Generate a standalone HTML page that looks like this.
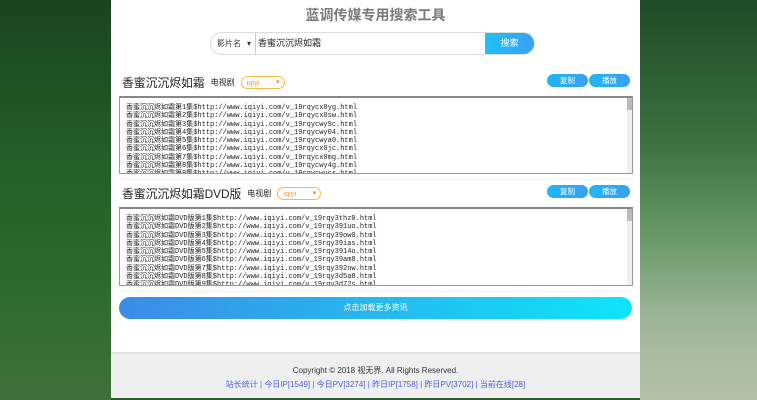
<!DOCTYPE html>
<html><head><meta charset="utf-8"><style>
*{box-sizing:border-box;margin:0;padding:0}
body{width:757px;height:400px;overflow:hidden;position:relative;font-family:"Liberation Sans","Noto Sans CJK SC",sans-serif;
background:#2a6030;}
.bgr{position:absolute;left:640px;top:0;width:117px;height:400px;background:linear-gradient(180deg,#1f4a26 0%,#3c7040 35%,#6a9a6a 60%,#9fb59a 80%,#b5c2aa 100%)}
.bgl{position:absolute;left:0;top:0;width:111px;height:400px;background:linear-gradient(180deg,#1b4420 0%,#245e28 40%,#2c6a2c 70%,#406f3a 100%)}
.panel{position:absolute;left:111px;top:0;width:529px;height:352px;background:#fff}
.foot{position:absolute;left:111px;top:352px;width:529px;height:46px;background:#efefef;border-top:2px solid #e4e4e4;text-align:center}
.title{position:absolute;top:5px;width:100%;text-align:center;font-size:14px;font-weight:bold;color:#7a7a7a}
.search{position:absolute;left:99px;top:32px;width:325px;height:23px;border:1px solid #ddd;border-radius:12px;overflow:hidden;background:#fff}
.sel{position:absolute;left:0;top:0;width:45px;height:21px;font-size:8px;line-height:21px;padding-left:6px;color:#333;border-right:1px solid #ccc}
.sel::after{content:"▾";position:absolute;right:4px;font-size:8px}
.inp{position:absolute;left:47px;top:0;font-size:9px;line-height:21px;color:#222}
.btn{position:absolute;right:0;top:0;width:49px;height:21px;background:linear-gradient(90deg,#1fc0f7,#3aa0f2);color:#fff;font-size:9px;line-height:21px;text-align:center}
.h{position:absolute;left:11px;display:flex;align-items:center;height:16px;font-size:11.8px;color:#222}
.h small{font-size:8px;margin-left:6px}
.dd{position:relative;margin-left:6px;width:44px;height:13px;border:1px solid #f7b84a;border-radius:7px;font-size:7.5px;color:#f49b2c;line-height:11px;padding-left:5px}
.dd::after{content:"▾";position:absolute;right:4px;top:0;font-size:7px;color:#e79020}
.b2{position:absolute;width:41px;height:13px;border-radius:7px;background:linear-gradient(90deg,#1fb6f6,#3aa0f2);color:#fff;font-size:7.5px;line-height:13px;text-align:center}
.ta{position:absolute;left:8px;width:514px;border:1px solid #999;border-top:2px solid #888;overflow:hidden;padding:6px 0 0 6px;font-family:"Liberation Mono","Noto Sans CJK SC",monospace;font-size:7px;line-height:8.3px;color:#222;white-space:pre}
.sb{position:absolute;right:0;top:0;width:5px;height:100%;background:#f0f0f0}
.sb::before{content:"";position:absolute;left:0;top:0;width:5px;height:12px;background:#bbb}
.more{position:absolute;left:8px;top:297px;width:513px;height:22px;border-radius:11px;background:linear-gradient(90deg,#3c8ce6,#0ee5f8);color:#fff;font-size:8px;line-height:22px;text-align:center}
.sep{position:absolute;left:8px;width:513px;height:1px;background:#eee}
</style></head><body>
<div class="bgl"></div><div class="bgr"></div>
<div class="panel">
<div class="title">蓝调传媒专用搜索工具</div>
<div class="search"><div class="sel">影片名</div><div class="inp">香蜜沉沉烬如霜</div><div class="btn">搜索</div></div>
<div class="h" style="top:74px">香蜜沉沉烬如霜<small>电视剧</small><div class="dd">iqiyi</div></div>
<div class="b2" style="left:436px;top:74px">复制</div><div class="b2" style="left:478px;top:74px">播放</div>
<div class="ta" style="top:96px;height:78px"><div class="sb"></div>香蜜沉沉烬如霜第1集$http://www.iqiyi.com/v_19rqycx0yg.html
香蜜沉沉烬如霜第2集$http://www.iqiyi.com/v_19rqycx0sw.html
香蜜沉沉烬如霜第3集$http://www.iqiyi.com/v_19rqycwy9c.html
香蜜沉沉烬如霜第4集$http://www.iqiyi.com/v_19rqycwy04.html
香蜜沉沉烬如霜第5集$http://www.iqiyi.com/v_19rqycwya0.html
香蜜沉沉烬如霜第6集$http://www.iqiyi.com/v_19rqycx0jc.html
香蜜沉沉烬如霜第7集$http://www.iqiyi.com/v_19rqycx0mg.html
香蜜沉沉烬如霜第8集$http://www.iqiyi.com/v_19rqycwy4g.html
香蜜沉沉烬如霜第9集$http://www.iqiyi.com/v_19rqycwycs.html</div>
<div class="sep" style="top:179px"></div>
<div class="h" style="top:185px">香蜜沉沉烬如霜DVD版<small>电视剧</small><div class="dd">iqiyi</div></div>
<div class="b2" style="left:436px;top:185px">复制</div><div class="b2" style="left:478px;top:185px">播放</div>
<div class="ta" style="top:207px;height:79px"><div class="sb"></div>香蜜沉沉烬如霜DVD版第1集$http://www.iqiyi.com/v_19rqy3thz0.html
香蜜沉沉烬如霜DVD版第2集$http://www.iqiyi.com/v_19rqy391uo.html
香蜜沉沉烬如霜DVD版第3集$http://www.iqiyi.com/v_19rqy39ow0.html
香蜜沉沉烬如霜DVD版第4集$http://www.iqiyi.com/v_19rqy39ias.html
香蜜沉沉烬如霜DVD版第5集$http://www.iqiyi.com/v_19rqy3914o.html
香蜜沉沉烬如霜DVD版第6集$http://www.iqiyi.com/v_19rqy39am8.html
香蜜沉沉烬如霜DVD版第7集$http://www.iqiyi.com/v_19rqy392nw.html
香蜜沉沉烬如霜DVD版第8集$http://www.iqiyi.com/v_19rqy3d5a8.html
香蜜沉沉烬如霜DVD版第9集$http://www.iqiyi.com/v_19rqy3d72s.html</div>
<div class="sep" style="top:291px"></div>
<div class="more">点击加载更多资讯</div>
</div>
<div class="foot">
<div style="font-size:8px;color:#333;margin-top:11px">Copyright © 2018 视无界. All Rights Reserved.</div>
<div style="font-size:8px;color:#4a5ee8;margin-top:3px">站长统计 | 今日IP[1549] | 今日PV[3274] | 昨日IP[1758] | 昨日PV[3702] | 当前在线[28]</div>
</div>
</body></html>
